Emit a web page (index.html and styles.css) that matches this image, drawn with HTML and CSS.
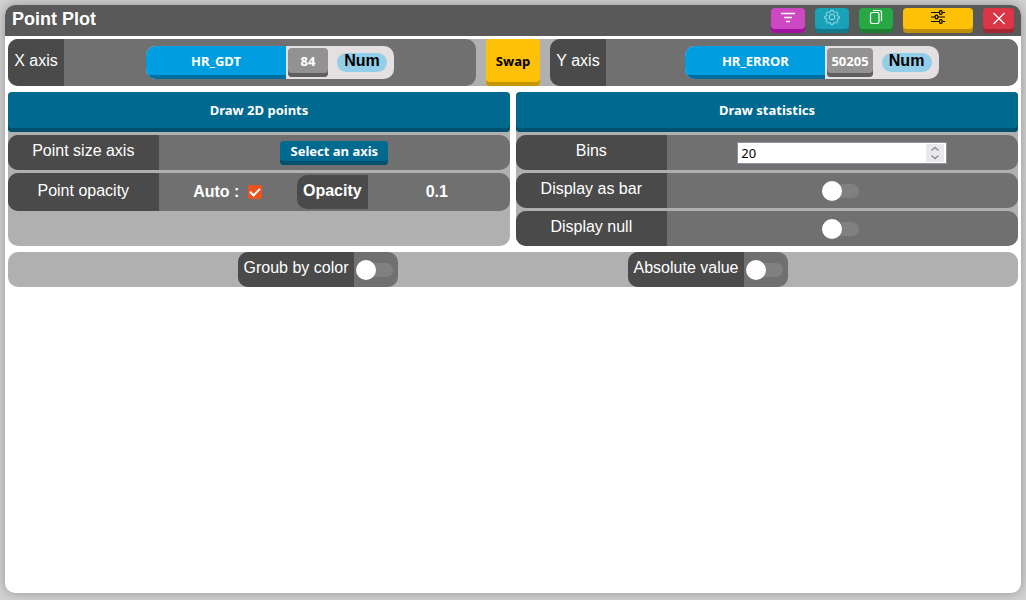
FILE: index.html
```html
<!DOCTYPE html>
<html lang="en">
<head>
<meta charset="utf-8">
<title>Point Plot</title>
<link rel="stylesheet" href="styles.css">
</head>
<body>
<main class="window">
  <header class="titlebar">
    <h1 class="title">Point Plot</h1>
    <button class="tool filter" type="button" aria-label="Filter"><svg width="16" height="16" viewBox="0 0 16 16"><path d="M1 4.500h14M4 8.500h8M6 12.500h4" stroke="#fff" stroke-width="1.500"/></svg></button>
    <button class="tool settings" type="button" aria-label="Settings"><svg width="16" height="16" viewBox="0 0 16 16" fill="none" stroke="#a9dce5" stroke-width="1"><circle cx="8" cy="8" r="2.800"/><path d="M6.900 1.300h2.200l.5 1.800 1.100.5 1.700-.9 1.500 1.500-.9 1.700.5 1.100 1.800.5v1.900l-1.800.5-.5 1.100.9 1.700-1.500 1.500-1.700-.9-1.100.5-.5 1.500H6.900l-.5-1.500-1.100-.5-1.700.9-1.500-1.500.9-1.700-.5-1.100-1.800-.5V7.500l1.800-.5.5-1.100-.9-1.700 1.500-1.500 1.700.9 1.100-.5z"/></svg></button>
    <button class="tool copy" type="button" aria-label="Copy"><svg width="16" height="16" viewBox="0 0 16 16" fill="none" stroke="#fff" stroke-width="1.200"><rect x="2.500" y="3.500" width="8.500" height="11" rx="1.500"/><path d="M5 1.500h6.500a2 2 0 0 1 2 2V12"/></svg></button>
    <button class="tool options" type="button" aria-label="Options"><svg width="16" height="16" viewBox="0 0 16 16" fill="none" stroke="#000" stroke-width="1.200"><path d="M1 3.500h8.500M12.500 3.500H15M1 8h4M8 8h7M1 12.500h8.500M12.500 12.500H15"/><rect x="9.500" y="1.700" width="2.600" height="3.600" rx="1"/><rect x="5.200" y="6.200" width="2.600" height="3.600" rx="1"/><rect x="9.500" y="10.700" width="2.600" height="3.600" rx="1"/></svg></button>
    <button class="tool close" type="button" aria-label="Close"><svg width="16" height="16" viewBox="0 0 16 16"><path d="M2.500 4l11 11M13.500 4l-11 11" stroke="#fff" stroke-width="1.400"/></svg></button>
  </header>

  <section class="axes">
    <div class="field axis">
      <span class="name">X axis</span>
      <div class="value">
        <div class="column"><button class="column-name" type="button">HR_GDT</button><button class="count" type="button">84</button><span class="kind">Num</span></div>
      </div>
    </div>
    <button class="swap" type="button">Swap</button>
    <div class="field axis">
      <span class="name">Y axis</span>
      <div class="value">
        <div class="column"><button class="column-name" type="button">HR_ERROR</button><button class="count" type="button">50205</button><span class="kind">Num</span></div>
      </div>
    </div>
  </section>

  <section class="panels">
    <div class="panel">
      <button class="draw" type="button">Draw 2D points</button>
      <div class="field">
        <span class="name">Point size axis</span>
        <div class="value"><button class="select-axis" type="button">Select an axis</button></div>
      </div>
      <div class="field tall">
        <span class="name">Point opacity</span>
        <div class="value opacity">
          <label class="auto">Auto : <input class="tick" type="checkbox" checked></label>
          <span class="opacity-name">Opacity</span>
          <output class="amount">0.1</output>
        </div>
      </div>
    </div>
    <div class="panel">
      <button class="draw" type="button">Draw statistics</button>
      <div class="field">
        <label class="name" for="bins">Bins</label>
        <div class="value">
          <div class="number"><input id="bins" type="number" value="20"><svg class="spinner" width="18" height="18" viewBox="0 0 18 18" fill="none" stroke="#8f8f9d" stroke-width="1.500"><path d="M5.500 6.500L9 3.500l3.500 3M5.500 11.500L9 14.500l3.500-3"/></svg></div>
        </div>
      </div>
      <div class="field">
        <label class="name" for="as-bar">Display as bar</label>
        <div class="value"><input class="toggle" id="as-bar" type="checkbox"></div>
      </div>
      <div class="field">
        <label class="name" for="show-null">Display null</label>
        <div class="value"><input class="toggle" id="show-null" type="checkbox"></div>
      </div>
    </div>
  </section>

  <section class="modes">
    <div class="field mode">
      <label class="name" for="group">Groub by color</label>
      <div class="value"><input class="toggle" id="group" type="checkbox"></div>
    </div>
    <div class="field mode">
      <label class="name" for="absolute">Absolute value</label>
      <div class="value"><input class="toggle" id="absolute" type="checkbox"></div>
    </div>
  </section>
</main>
</body>
</html>
```
FILE: styles.css
```css
*, *::before, *::after { box-sizing: border-box; }

body {
  margin: 0;
  min-height: 100vh;
  padding: 5px 5px 7px;
  display: flex;
  background: #d2d2d2;
  color: #fff;
  font: 16px/20px "Liberation Sans", Arial, sans-serif;
}

button {
  border: 0;
  padding: 0;
  color: #fff;
  font: bold 13px/18px "Noto Sans", "Open Sans", sans-serif;
}

input { margin: 0; }

.window {
  flex: 1;
  display: flex;
  flex-direction: column;
  background: #fff;
  border-radius: 10px;
  box-shadow: 0 0 12px rgba(0, 0, 0, 0.3);
}

.titlebar {
  display: flex;
  gap: 10px;
  padding: 3px 7px;
  background: #595959;
  border-radius: 10px 10px 0 0;
}

.title {
  flex: 1;
  margin: 0;
  font-size: 18px;
  line-height: 22px;
}

.tool {
  display: flex;
  justify-content: center;
  align-items: center;
  width: 34px;
  height: 25px;
  padding-bottom: 7px;
  border-radius: 4px;
  box-shadow: inset 0 -4px rgba(0, 0, 0, 0.25);
}

.filter { background: #cd48c2; box-shadow: inset 0 -4px #a011a0; }
.settings { background: #17a2b8; }
.copy { background: #28a745; }
.options { width: 70px; background: #ffc107; }
.close { width: 31px; background: #dc3545; }

.axes {
  display: flex;
  gap: 10px;
  margin: 3px 3px 0;
  background: #b0b0b0;
  border-radius: 10px;
}

.field {
  display: flex;
  min-height: 35px;
  background: #707070;
  border-radius: 10px;
  overflow: hidden;
}

.name {
  display: flex;
  justify-content: center;
  align-items: center;
  width: 30%;
  padding-bottom: 4px;
  background: #4a4a4a;
}

.value {
  flex: 1;
  display: flex;
  justify-content: center;
  align-items: center;
}

.axis { flex: 1; min-height: 47px; }
.axis .name { width: 56px; }

.column {
  display: flex;
  align-items: center;
  height: 33px;
  padding-right: 7px;
  background: #e4dfe0;
  border-radius: 10px;
  overflow: hidden;
}

.column-name {
  align-self: stretch;
  width: 140px;
  padding-bottom: 4px;
  background: #009de0;
  box-shadow: inset 0 -4px #006f9e;
}

.count {
  min-width: 40px;
  height: 29px;
  margin: 0 9px 0 2px;
  padding: 0 4px 4px;
  background: #929292;
  border-radius: 4px;
  box-shadow: inset 0 -4px #606060;
}

.kind {
  width: 50px;
  height: 19px;
  background: #93cee8;
  border-radius: 10px;
  color: #000;
  font-weight: bold;
  line-height: 16px;
  text-align: center;
}

.swap {
  width: 54px;
  padding-bottom: 4px;
  background: #ffc107;
  border-radius: 4px;
  box-shadow: inset 0 -4px #c79605;
  color: #000;
}

.panels {
  display: grid;
  grid-template-columns: 1fr 1fr;
  gap: 6px;
  margin: 6px 3px;
}

.panel {
  display: flex;
  flex-direction: column;
  gap: 3px;
  background: #b0b0b0;
  border-radius: 4px 4px 10px 10px;
}

.draw {
  height: 40px;
  padding-bottom: 4px;
  background: #00698f;
  border-radius: 4px;
  box-shadow: inset 0 -4px #00506e;
}

.select-axis {
  height: 24px;
  padding: 0 10px 4px;
  background: #00698f;
  border-radius: 4px;
  box-shadow: inset 0 -4px #00506e;
}

.tall { min-height: 38px; }
.tall .name { padding-bottom: 2px; }

.opacity {
  display: grid;
  grid-template-columns: 1fr auto 1fr;
  padding-right: 4px;
  font-weight: bold;
  text-align: center;
}

.auto {
  display: flex;
  justify-content: center;
  align-items: center;
  gap: 9px;
}

.tick {
  appearance: none;
  display: flex;
  justify-content: center;
  align-items: flex-start;
  width: 14px;
  height: 14px;
  padding-top: 3px;
  background: #e95420;
  border-radius: 2px;
}

.tick:checked::before {
  content: "";
  width: 10px;
  height: 6px;
  border: solid #fff;
  border-width: 0 0 2px 2px;
  transform: rotate(-45deg);
}

.opacity-name {
  height: 34px;
  padding: 6px 6px 0;
  background: #4a4a4a;
  border-radius: 10px 0 0 10px;
}

.number { position: relative; width: 210px; }

.number input {
  appearance: textfield;
  display: block;
  width: 100%;
  height: 22px;
  padding: 0 24px 0 3px;
  border: 1px solid #8f8f9d;
  background: #fff;
  color: #000;
  font: 13px/20px "Noto Sans", "Open Sans", sans-serif;
}

.number input::-webkit-inner-spin-button { appearance: none; }

.spinner {
  position: absolute;
  top: 2px;
  right: 3px;
  background: #e9e9ed;
}

.toggle {
  appearance: none;
  display: grid;
  grid-template-columns: 20px 17px;
  align-items: center;
  width: 37px;
  height: 20px;
  margin-right: 4px;
}

.toggle::before {
  content: "";
  grid-area: 1 / 1;
  z-index: 1;
  height: 20px;
  background: #fff;
  border-radius: 50%;
}

.toggle::after {
  content: "";
  grid-area: 1 / 1 / 2 / 3;
  height: 14px;
  margin-left: 3px;
  background: #808080;
  border-radius: 7px;
}

.toggle:checked::before { transform: translateX(17px); }

.modes {
  display: flex;
  justify-content: space-evenly;
  margin: 0 3px;
  background: #b0b0b0;
  border-radius: 10px;
}

.mode { width: 160px; }
.mode .name { width: 116px; }
```
